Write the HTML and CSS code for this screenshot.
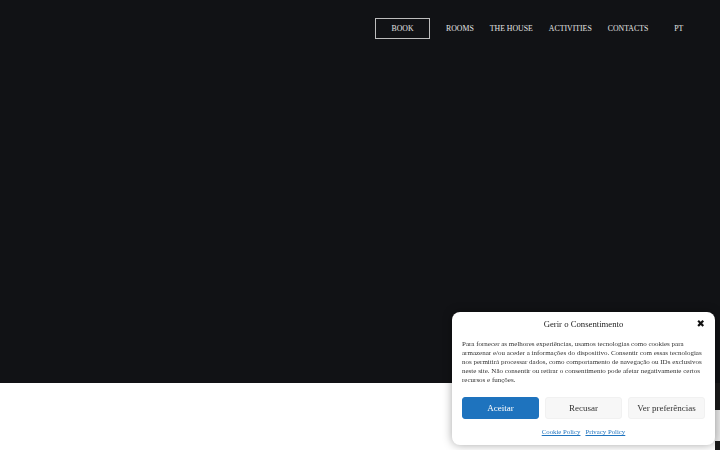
FILE: index.html
```html
<!DOCTYPE html>
<html lang="pt">
<head>
<meta charset="utf-8">
<link rel="stylesheet" href="styles.css">
</head>
<body>
<header class="hero">
  <nav class="nav">
    <a class="nav-book" href="#">BOOK</a>
    <a class="nav-item" href="#">ROOMS</a>
    <a class="nav-item" href="#">THE HOUSE</a>
    <a class="nav-item" href="#">ACTIVITIES</a>
    <a class="nav-item" href="#">CONTACTS</a>
    <a class="nav-item nav-lang" href="#">PT</a>
  </nav>
</header>
<main class="content"></main>
<div class="badge"></div>
<div class="consent">
  <div class="consent-head">
    <span class="consent-title">Gerir o Consentimento</span>
    <span class="consent-close">&#10006;</span>
  </div>
  <p class="consent-text">Para fornecer as melhores experiências, usamos tecnologias como cookies para armazenar e/ou aceder a informações do dispositivo. Consentir com essas tecnologias nos permitirá processar dados, como comportamento de navegação ou IDs exclusivos neste site. Não consentir ou retirar o consentimento pode afetar negativamente certos recursos e funções.</p>
  <div class="consent-buttons">
    <button class="btn btn-accept">Aceitar</button>
    <button class="btn">Recusar</button>
    <button class="btn">Ver preferências</button>
  </div>
  <div class="consent-links">
    <a href="#">Cookie Policy</a>
    <a href="#">Privacy Policy</a>
  </div>
</div>
</body>
</html>
```

FILE: styles.css
```css
html, body {
  margin: 0;
  padding: 0;
  background: #ffffff;
  font-family: "Liberation Serif", "DejaVu Serif", serif;
}
.hero {
  height: 383px;
  background: #111215;
}
.nav {
  display: flex;
  align-items: center;
  gap: 16px;
  padding: 18px 0 0 375px;
  white-space: nowrap;
}
.nav a {
  color: #e4e4e4;
  text-decoration: none;
  font-size: 7.8px;
  letter-spacing: 0;
  -webkit-font-smoothing: antialiased;
}
.nav-book {
  box-sizing: border-box;
  width: 55px;
  height: 21px;
  border: 1px solid #bdbdbd;
  display: flex;
  align-items: center;
  justify-content: center;
}
.nav-lang {
  margin-left: 10px;
}
.content {
  height: 67px;
}
.badge {
  position: fixed;
  right: 0;
  top: 383px;
  width: 5px;
  height: 67px;
  background: linear-gradient(#1b1b1b 0 27px, #e8e8e8 27px 58px, #1b1b1b 58px);
}
.consent {
  position: fixed;
  left: 452px;
  top: 312px;
  width: 263px;
  height: 133px;
  box-sizing: border-box;
  padding: 6px 10px 0 10px;
  background: #ffffff;
  border-radius: 8px;
  box-shadow: 0 0 10px rgba(0,0,0,0.35);
  color: #222;
  display: flex;
  flex-direction: column;
}
.consent-head {
  position: relative;
  display: flex;
  justify-content: center;
  align-items: center;
  height: 12px;
}
.consent-title {
  font-size: 8.7px;
  color: #222;
}
.consent-close {
  position: absolute;
  right: 0;
  top: 0;
  font-size: 10px;
  line-height: 12px;
  color: #111;
  font-weight: bold;
  font-family: "DejaVu Sans", sans-serif;
}
.consent-text {
  margin: 10px 0 0 0;
  font-size: 7px;
  line-height: 9px;
  color: #333;
}
.consent-buttons {
  display: flex;
  gap: 6px;
  margin-top: 12px;
}
.btn {
  flex: 1;
  height: 22px;
  border: 1px solid #f1f1f1;
  border-radius: 3px;
  background: #f7f7f7;
  color: #333;
  font-family: "Liberation Serif", "DejaVu Serif", serif;
  font-size: 9px;
  padding: 0;
}
.btn-accept {
  background: #1e73be;
  border-color: #1e73be;
  color: #ffffff;
}
.consent-links {
  display: flex;
  justify-content: center;
  gap: 5px;
  margin-top: 9px;
}
.consent-links a {
  color: #1e73be;
  font-size: 6.8px;
  text-decoration: underline;
}
```
